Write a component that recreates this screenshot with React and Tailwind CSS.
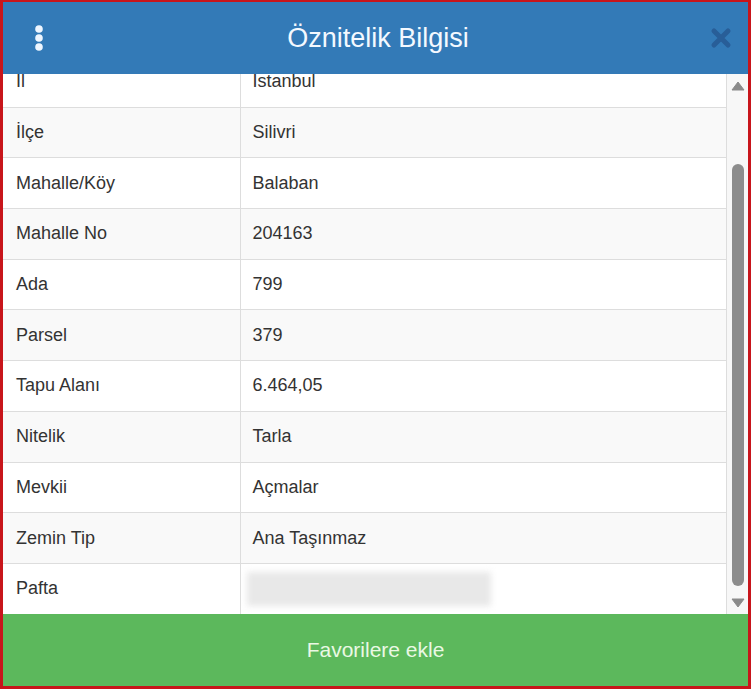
import { useEffect, useRef } from 'react'

const rows = [
  ['İl', 'İstanbul'],
  ['İlçe', 'Silivri'],
  ['Mahalle/Köy', 'Balaban'],
  ['Mahalle No', '204163'],
  ['Ada', '799'],
  ['Parsel', '379'],
  ['Tapu Alanı', '6.464,05'],
  ['Nitelik', 'Tarla'],
  ['Mevkii', 'Açmalar'],
  ['Zemin Tip', 'Ana Taşınmaz'],
  ['Pafta', null],
]

function MenuDots() {
  return (
    <svg width="14" height="30" viewBox="0 0 14 30">
      <circle cx="7" cy="6" r="3.8" fill="#eef6ff" />
      <circle cx="7" cy="15" r="3.8" fill="#eef6ff" />
      <circle cx="7" cy="24" r="3.8" fill="#eef6ff" />
    </svg>
  )
}

function CloseIcon() {
  return (
    <svg width="22" height="22" viewBox="0 0 22 22">
      <path d="M4 4 L18 18 M18 4 L4 18" stroke="#285e98" strokeWidth="5" strokeLinecap="round" />
    </svg>
  )
}

function FakeScrollbar() {
  return (
    <div className="w-[21px] shrink-0 bg-[#f7f7f7] flex flex-col items-center">
      <svg width="14" height="10" viewBox="0 0 14 10" className="mt-[7px]">
        <path d="M7 1 L13 9 L1 9 Z" fill="#8a8a8a" stroke="#8a8a8a" strokeLinejoin="round" />
      </svg>
      <div className="mt-[73px] w-[12px] h-[422px] rounded-full bg-[#8c8c8c]" />
      <div className="flex-1" />
      <svg width="14" height="10" viewBox="0 0 14 10" className="mb-[6px]">
        <path d="M1 1 L13 1 L7 9 Z" fill="#8a8a8a" stroke="#8a8a8a" strokeLinejoin="round" />
      </svg>
    </div>
  )
}

export default function App() {
  const bodyRef = useRef(null)

  // the attribute list opens scrolled to its last row
  useEffect(() => {
    const el = bodyRef.current
    if (el) el.scrollTop = el.scrollHeight
  }, [])

  return (
    <div
      className="w-[751px] h-[689px] flex flex-col border-[#c8151b] border-t-[2px] border-l-[3px] border-r-[3px] border-b-[3px] bg-white"
      style={{ fontFamily: '"Liberation Sans", Arial, sans-serif' }}
    >
      <div className="h-[72px] shrink-0 bg-[#337ab7] flex items-center justify-between px-[29px]">
        <MenuDots />
        <h1 className="text-[27px] text-[#f4f9ff] leading-none">Öznitelik Bilgisi</h1>
        <div className="-mr-[13px]">
          <CloseIcon />
        </div>
      </div>

      <div className="flex-1 flex min-h-0">
        <div ref={bodyRef} className="flex-1 overflow-hidden border-r border-[#dddddd]">
          <table className="w-full border-collapse text-[18px] text-[#333333]">
            <tbody>
              {rows.map(([label, value], i) => (
                <tr key={label} className={`h-[50.7px] ${i % 2 === 1 ? 'bg-[#f9f9f9]' : 'bg-white'}`}>
                  <td className="w-[237px] border-t border-r border-[#dddddd] pl-[13px]">{label}</td>
                  <td className="border-t border-[#dddddd] pl-[12px]">
                    {value ?? (
                      <div className="w-[244px] h-[34px] -ml-[6px] bg-[#e8e8e8] blur-[3px]" />
                    )}
                  </td>
                </tr>
              ))}
            </tbody>
          </table>
        </div>
        <FakeScrollbar />
      </div>

      <button className="h-[72px] shrink-0 bg-[#5cb85c] text-[21px] text-[#eaf8e4]">
        Favorilere ekle
      </button>
    </div>
  )
}
